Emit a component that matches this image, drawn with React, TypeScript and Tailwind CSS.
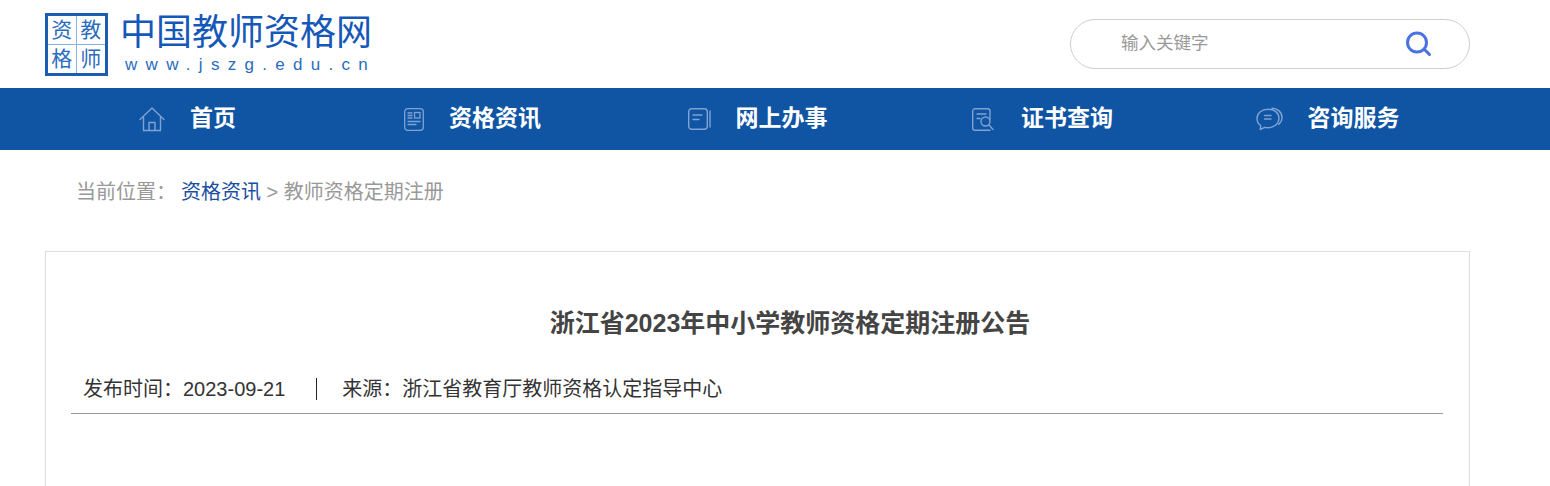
const cjk = "font-['Liberation_Sans','Noto_Sans_CJK_SC',sans-serif]";

function HomeIcon() {
  return (
    <svg width="26" height="25" viewBox="0 0 26 25" fill="none" stroke="#7fa3d2" strokeWidth="1.4" strokeLinejoin="round" strokeLinecap="round">
      <path d="M1 12.500 13 1l12 11.500" />
      <path d="M4.500 10v13.500h17V10" />
      <path d="M10 23.500v-8h6v8" />
    </svg>
  );
}

function NewsIcon() {
  return (
    <svg width="20" height="23" viewBox="0 0 20 23" fill="none" stroke="#7fa3d2" strokeWidth="1.3" strokeLinecap="round">
      <rect x="0.700" y="0.700" width="18.600" height="21.600" rx="3" />
      <rect x="10.500" y="4.500" width="5.500" height="5.500" />
      <path d="M4 5h4M4 7.500h4M4 10h4M4 13.500h12M4 16.500h8" />
    </svg>
  );
}

function BookIcon() {
  return (
    <svg width="23" height="22" viewBox="0 0 23 22" fill="none" stroke="#7fa3d2" strokeWidth="1.4" strokeLinecap="round">
      <rect x="0.700" y="0.700" width="18.600" height="20.600" rx="3" />
      <path d="M5 7h9M5 11.500h6" />
      <path d="M22 3v16" />
    </svg>
  );
}

function CertSearchIcon() {
  return (
    <svg width="22" height="23" viewBox="0 0 22 23" fill="none" stroke="#7fa3d2" strokeWidth="1.4" strokeLinecap="round">
      <path d="M18 11V3a2.300 2.300 0 0 0-2.300-2.300H3A2.300 2.300 0 0 0 .7 3v17A2.300 2.300 0 0 0 3 22.300h15" />
      <path d="M5 6h9M5 10.500h3" />
      <circle cx="13.500" cy="13.500" r="4.500" />
      <path d="m17 17 4 4.500" />
    </svg>
  );
}

function ChatIcon() {
  return (
    <svg width="27" height="24" viewBox="0 0 27 24" fill="none" stroke="#7fa3d2" strokeWidth="1.4" strokeLinecap="round" strokeLinejoin="round">
      <path d="M16 1.200c5.500 0 10 4 10 9.300 0 2.800-1.300 5.200-3.400 6.900" />
      <path d="M12 2.200C6 2.200 1 6 1 11.700c0 3.100 1.500 5.400 3.800 7l-.6 3.800 4.500-2.200c1 .3 2.100.4 3.300.4 6 0 11-3.900 11-9.500S18 2.200 12 2.200Z" />
      <path d="M8.500 8.500h6.500M8.500 12h6.500" />
    </svg>
  );
}

const navItems = [
  { label: "首页", icon: <HomeIcon />, gap: "gap-[25px]" },
  { label: "资格资讯", icon: <NewsIcon />, gap: "gap-[25px]" },
  { label: "网上办事", icon: <BookIcon />, gap: "gap-[25px]" },
  { label: "证书查询", icon: <CertSearchIcon />, gap: "gap-[27px]" },
  { label: "咨询服务", icon: <ChatIcon />, gap: "gap-[25px]" },
];

export default function App() {
  return (
    <div className={`h-[486px] overflow-hidden bg-white ${cjk}`}>
      <header className="ml-[45px] flex h-[88px] w-[1425px] items-start justify-between">
        <div className="flex pt-[13px]">
          <div className="grid h-[63px] w-[63px] grid-cols-2 grid-rows-2 border-[3px] border-[#1c5db4] text-[21px] leading-none text-[#2b6cc0]">
            <div className="flex items-center justify-center border-r border-b border-[#8fb2e0]">资</div>
            <div className="flex items-center justify-center border-b border-[#8fb2e0]">教</div>
            <div className="flex items-center justify-center border-r border-[#8fb2e0]">格</div>
            <div className="flex items-center justify-center">师</div>
          </div>
          <div className="ml-[12px] flex flex-col">
            <div className="text-[36px] leading-[40px] whitespace-nowrap text-[#1558b8]">中国教师资格网</div>
            <div className="mt-[2px] pl-[5px] text-[17px] leading-[20px] tracking-[8.300px] whitespace-nowrap text-[#2b6cc0]">www.jszg.edu.cn</div>
          </div>
        </div>
        <div className="mt-[19px] flex h-[50px] w-[400px] items-center justify-between rounded-[25px] border border-[#cfcfcf] pr-[37px] pl-[50px]">
          <input
            placeholder="输入关键字"
            className="mb-[2px] w-[200px] bg-transparent text-[17.500px] outline-none placeholder:text-[#999]"
          />
          <svg width="27" height="26" viewBox="0 0 27 26" fill="none" stroke="#4a72e0" strokeWidth="3" strokeLinecap="round">
            <circle cx="12" cy="11.500" r="9.500" />
            <path d="m19.500 18.500 5 5" />
          </svg>
        </div>
      </header>

      <nav className="h-[62px] bg-[#1054a4]">
        <ul className="ml-[45px] grid h-full w-[1425px] grid-cols-5">
          {navItems.map((item) => (
            <li key={item.label} className={`flex items-center justify-center ${item.gap}`}>
              {item.icon}
              <span className="mb-[2px] text-[23px] font-bold text-white">{item.label}</span>
            </li>
          ))}
        </ul>
      </nav>

      <div className="pt-[27px] pl-[76px] text-[20px] leading-[30px] whitespace-nowrap text-[#999]">
        <span className="mr-[5px]">当前位置：</span>
        <a className="text-[#1a4fa0]">资格资讯</a>
        <span> &gt; 教师资格定期注册</span>
      </div>

      <main className="mt-[44px] ml-[45px] w-[1425px] border border-[#ddd] pt-[53px] pr-[26px] pb-[200px] pl-[25px]">
        <h1 className="pl-[66px] text-center text-[25px] leading-[36px] font-bold text-[#444]">浙江省2023年中小学教师资格定期注册公告</h1>
        <div className="mt-[34px] flex h-[39px] items-start border-b border-[#999] pl-[12px] text-[20px] leading-[28px] whitespace-nowrap text-[#333]">
          <span>发布时间：2023-09-21</span>
          <span className="mt-[3px] mr-[25px] ml-[31px] h-[22px] w-px bg-[#222]" />
          <span>来源：浙江省教育厅教师资格认定指导中心</span>
        </div>
      </main>
    </div>
  );
}
